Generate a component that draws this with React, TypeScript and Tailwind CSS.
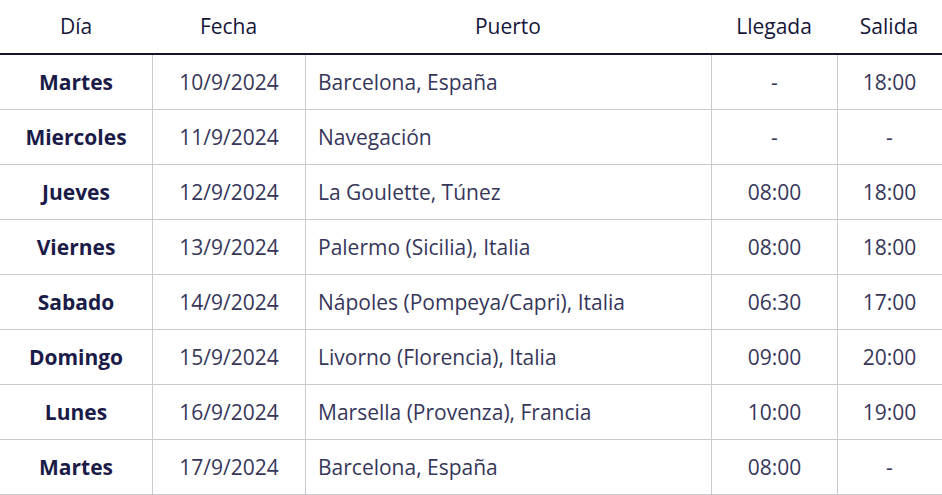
import React from 'react';

interface Stop {
  day: string;
  date: string;
  port: string;
  arrival: string;
  departure: string;
}

const stops: Stop[] = [
  { day: 'Martes', date: '10/9/2024', port: 'Barcelona, España', arrival: '-', departure: '18:00' },
  { day: 'Miercoles', date: '11/9/2024', port: 'Navegación', arrival: '-', departure: '-' },
  { day: 'Jueves', date: '12/9/2024', port: 'La Goulette, Túnez', arrival: '08:00', departure: '18:00' },
  { day: 'Viernes', date: '13/9/2024', port: 'Palermo (Sicilia), Italia', arrival: '08:00', departure: '18:00' },
  { day: 'Sabado', date: '14/9/2024', port: 'Nápoles (Pompeya/Capri), Italia', arrival: '06:30', departure: '17:00' },
  { day: 'Domingo', date: '15/9/2024', port: 'Livorno (Florencia), Italia', arrival: '09:00', departure: '20:00' },
  { day: 'Lunes', date: '16/9/2024', port: 'Marsella (Provenza), Francia', arrival: '10:00', departure: '19:00' },
  { day: 'Martes', date: '17/9/2024', port: 'Barcelona, España', arrival: '08:00', departure: '-' },
];

const cols = 'grid grid-cols-[152px_153px_406px_126px_104px]';

const App: React.FC = () => {
  return (
    <div className="w-[942px] h-[495px] bg-white font-['Open_Sans',sans-serif] text-[21px]">
      {/* Header */}
      <div className={`${cols} h-[55px] pt-px border-b-2 border-[#14142e] text-[#16163a] font-medium`}>
        <div className="flex items-center justify-center">Día</div>
        <div className="flex items-center justify-center">Fecha</div>
        <div className="flex items-center justify-center">Puerto</div>
        <div className="flex items-center justify-center">Llegada</div>
        <div className="flex items-center justify-center">Salida</div>
      </div>

      {/* Rows */}
      {stops.map((s, i) => (
        <div key={i} className={`${cols} h-[55px] border-b border-[#cbcbcf] text-[#36365a]`}>
          <div className="flex items-center justify-center pt-px font-bold text-[#1b1b48]">{s.day}</div>
          <div className="flex items-center justify-center pt-px border-l border-[#cbcbcf]">{s.date}</div>
          <div className="flex items-center pl-3 pt-px border-l border-[#cbcbcf]">{s.port}</div>
          <div className="flex items-center justify-center pt-px border-l border-[#cbcbcf]">{s.arrival}</div>
          <div className="flex items-center justify-center pt-px border-l border-[#cbcbcf]">{s.departure}</div>
        </div>
      ))}
    </div>
  );
};

export default App;
